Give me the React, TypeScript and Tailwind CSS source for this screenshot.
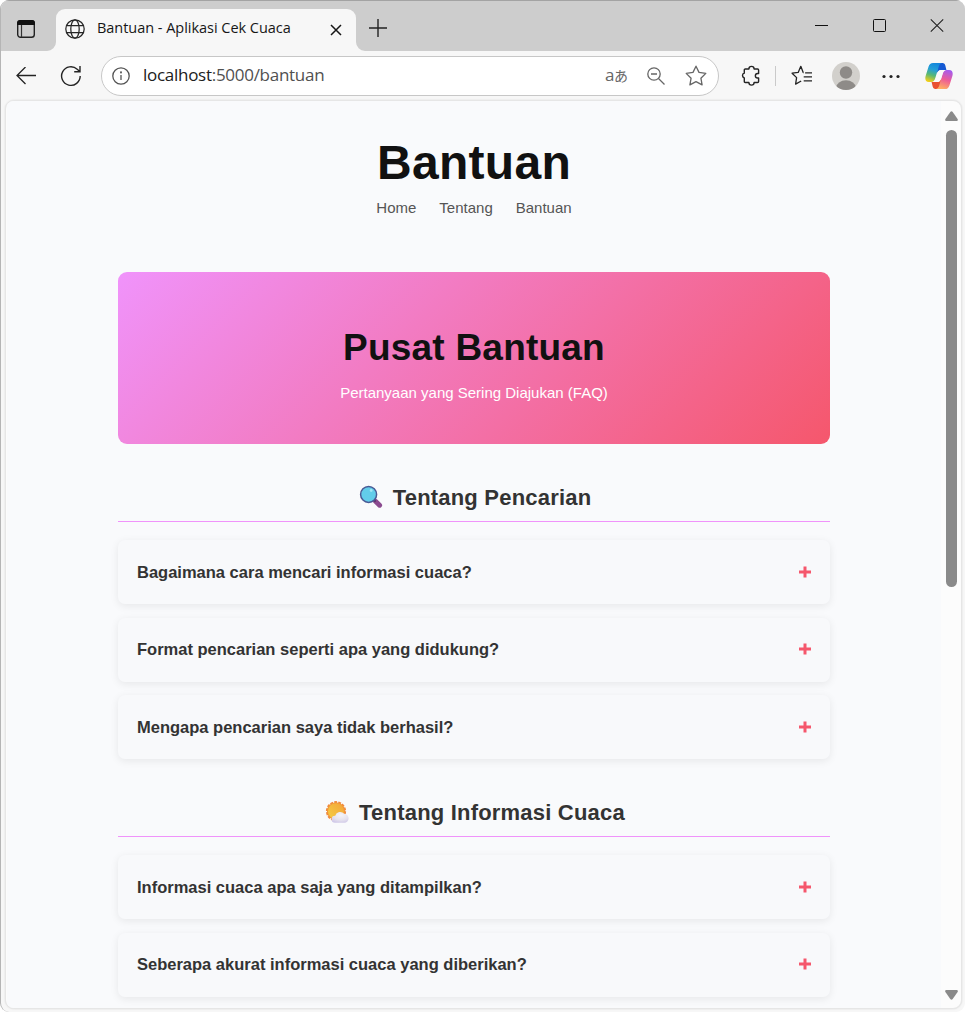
import React from "react";

const faqBlocks = [
  {
    icon: "search",
    title: "Tentang Pencarian",
    items: [
      "Bagaimana cara mencari informasi cuaca?",
      "Format pencarian seperti apa yang didukung?",
      "Mengapa pencarian saya tidak berhasil?",
    ],
  },
  {
    icon: "weather",
    title: "Tentang Informasi Cuaca",
    items: [
      "Informasi cuaca apa saja yang ditampilkan?",
      "Seberapa akurat informasi cuaca yang diberikan?",
    ],
  },
];

function MagnifierEmoji() {
  return (
    <svg width="24" height="24" viewBox="0 0 24 24" className="mt-px shrink-0">
      <path d="M16.5 16.3 20.6 20.2" stroke="#8b4a8f" strokeWidth="5" strokeLinecap="round" />
      <path d="m14.6 14.6 2 2" stroke="#533566" strokeWidth="2" />
      <circle cx="9.6" cy="9.4" r="8" fill="#62cdea" stroke="#4a5a95" strokeWidth="1.5" />
      <circle cx="12.2" cy="5.5" r="1.4" fill="#a1e6f5" />
    </svg>
  );
}

function SunCloudEmoji() {
  return (
    <svg width="24" height="24" viewBox="0 0 24 24" className="mt-px shrink-0">
      <defs>
        <linearGradient id="sun" x1="0" y1="1" x2="1" y2="0">
          <stop stopColor="#f5cf43" />
          <stop offset="1" stopColor="#f3a338" />
        </linearGradient>
        <radialGradient id="cloud" cx=".55" cy=".3" r=".75">
          <stop stopColor="#f5f4f7" />
          <stop offset=".6" stopColor="#e5e2ee" />
          <stop offset="1" stopColor="#cfc7e8" />
        </radialGradient>
      </defs>
      <circle cx="11" cy="11.2" r="9" fill="none" stroke="#f0883c" strokeWidth="2.2" strokeDasharray="2.8 1.24" />
      <circle cx="11" cy="11.2" r="9" fill="#f19439" />
      <circle cx="11" cy="11.2" r="8" fill="url(#sun)" />
      <path d="M10 22.8a3.5 3.5 0 1 1 .2-7 5.3 5.3 0 0 1 9-2.1c2.7.3 4.4 2.2 4.4 4.6 0 2.6-1.9 4.5-4.4 4.5Z" fill="url(#cloud)" />
    </svg>
  );
}

function TabStrip() {
  return (
    <div className="flex h-[51px] shrink-0 items-end border-t border-[#a3a3a3] bg-[#cdcdcd]">
      <div className="flex h-[42px] w-[55px] items-center pl-[15px]">
        <svg width="20" height="20" viewBox="0 0 20 20" fill="none" className="relative -top-px">
          <rect x="1.7" y="1.7" width="16.6" height="16.6" rx="2.8" stroke="#222" strokeWidth="1.4" />
          <path d="M1 6V4a3 3 0 0 1 3-3h12a3 3 0 0 1 3 3v2Z" fill="#111" />
          <path d="M5.5 6v12" stroke="#333" strokeWidth="1.2" />
        </svg>
      </div>
      <div className="relative flex h-[42px] w-[300px] items-center rounded-t-[9px] bg-[#f7f7f7] pl-[9px]">
        <svg width="9" height="9" className="absolute -left-[9px] bottom-0"><path d="M9 0v9H0a9 9 0 0 0 9-9Z" fill="#f7f7f7" /></svg>
        <svg width="9" height="9" className="absolute -right-[9px] bottom-0"><path d="M0 0v9h9a9 9 0 0 1-9-9Z" fill="#f7f7f7" /></svg>
        <svg width="20" height="20" viewBox="0 0 20 20" fill="none" stroke="#262626" strokeWidth="1.25" className="relative -top-px">
          <circle cx="10" cy="10" r="9.2" />
          <ellipse cx="10" cy="10" rx="4.2" ry="9.2" />
          <path d="M1.7 6.5h16.6M1.7 13.5h16.6" />
        </svg>
        <span className="relative -top-[2px] ml-[12px] w-[233px] shrink-0 whitespace-nowrap font-['Open_Sans','Noto_Sans',sans-serif] text-[14.5px] tracking-[-0.03px] text-[#161616]">Bantuan - Aplikasi Cek Cuaca</span>
        <svg width="12" height="12" viewBox="0 0 12 12" stroke="#161616" strokeWidth="1.5" className="shrink-0"><path d="m1 1 10 10M11 1 1 11" /></svg>
      </div>
      <svg width="18" height="18" viewBox="0 0 18 18" stroke="#222" strokeWidth="1.4" className="mb-[14px] ml-[13px]"><path d="M9 0v18M0 9h18" /></svg>
      <div className="mb-[17px] ml-auto flex items-center pr-[21px]">
        <svg width="13" height="16" viewBox="0 0 13 16" stroke="#111" className="mr-[45px]"><path d="M0 7.5h13" /></svg>
        <svg width="13" height="16" viewBox="0 0 13 16" fill="none" stroke="#111" className="mr-[44px]"><rect x=".5" y="1.5" width="12" height="12" rx="1" /></svg>
        <svg width="14" height="16" viewBox="0 0 14 16" stroke="#222" strokeWidth="1.1"><path d="m.8 1.3 12.4 12.4M13.2 1.3.8 13.7" /></svg>
      </div>
    </div>
  );
}

function CopilotMark() {
  return (
    <svg width="28" height="28" viewBox="0 0 28 28">
      <defs>
        <linearGradient id="cpA" x1=".6" y1="0" x2=".3" y2="1">
          <stop stopColor="#1386dc" /><stop offset=".35" stopColor="#239fd8" /><stop offset=".65" stopColor="#58b875" /><stop offset="1" stopColor="#f2cf19" />
        </linearGradient>
        <linearGradient id="cpB" x1=".7" y1="0" x2=".4" y2="1">
          <stop stopColor="#a45bf0" /><stop offset=".5" stopColor="#ed5c97" /><stop offset="1" stopColor="#ffaf62" />
        </linearGradient>
      </defs>
      <path d="M13 1h4.4c1.8 0 2.5 1 3 2.8l1 4.2h-5.4c-2.4 0-3.4 1.2-4.2 3.6Z" fill="#1559d3" />
      <path d="M15 27h-4.4c-1.8 0-2.5-1-3-2.8l-1-4.2H12c2.4 0 3.4-1.2 4.2-3.6Z" fill="#e95130" />
      <path d="M8 1h9.5c-2 0-3 1.4-3.7 3.4L10.6 15c-.9 3.2-2 5-4.4 5H3.8C.5 20-.3 17.2.7 13.8L3.6 4.6C4.4 2.2 5.6 1 8 1Z" fill="url(#cpA)" />
      <path d="M20 27h-9.5c2 0 3-1.4 3.7-3.4L17.4 13c.9-3.2 2-5 4.4-5h2.4c3.3 0 4.1 2.8 3.1 6.2l-2.9 9.2C23.6 25.8 22.4 27 20 27Z" fill="url(#cpB)" />
      <path d="M18.3 8h2.5c-2 .5-2.8 2-3.4 4l-1.3 4.3c-.8 2.5-1.7 3.7-4.1 3.7H8.3c1.5-.7 2-2.2 2.6-4l1.3-4.2C13 9.2 14.2 8 16 8Z" fill="#fafafa" />
    </svg>
  );
}

function Toolbar() {
  return (
    <div className="flex h-[49px] shrink-0 items-center bg-[#f7f7f7] pl-[15px]">
      <svg width="20" height="18" viewBox="0 0 20 18" fill="none" stroke="#242424" strokeWidth="1.3"><path d="M20 8.5H1M9.5 0 1 8.5 9.5 17" /></svg>
      <svg width="22" height="22" viewBox="0 0 22 22" fill="none" stroke="#242424" strokeWidth="1.4" className="ml-[24px]"><path d="M20.2 11a9.3 9.3 0 1 1-3-6.8L19.8 6.5M20 1v5.8h-5.8" /></svg>
      <div className="ml-[19px] flex h-[40px] w-[618px] items-center rounded-full border border-[#c7c7c7] bg-white pl-[10px]">
        <svg width="18" height="18" viewBox="0 0 18 18" fill="none" stroke="#555" strokeWidth="1.3"><circle cx="9" cy="9" r="8.2" /><path d="M9 8v5" /><circle cx="9" cy="5.4" r=".4" fill="#555" /></svg>
        <span className="relative -top-px ml-[13px] w-[462px] whitespace-nowrap font-['Open_Sans','Noto_Sans',sans-serif] text-[17px] tracking-[-0.28px] text-[#505050]"><span className="text-[#202020]">localhost</span>:5000/bantuan</span>
        <span className="relative -top-px w-[23px] whitespace-nowrap font-['Open_Sans','Noto_Sans_CJK_JP',sans-serif] text-[17px] leading-none tracking-[-0.5px] text-[#666]">a<span className="text-[14px]">あ</span></span>
        <svg width="18" height="18" viewBox="0 0 18 18" fill="none" stroke="#666" strokeWidth="1.3" className="ml-[19px]"><circle cx="7" cy="7" r="6.2" /><path d="M4 7h6M11.5 11.5l6 6" /></svg>
        <svg width="22" height="21" viewBox="0 0 22 21" fill="none" stroke="#666" strokeWidth="1.3" strokeLinejoin="round" className="ml-[20px]"><path d="m11 1.2 3 6.2 6.8 1-4.9 4.8 1.2 6.7L11 16.7l-6.1 3.2 1.2-6.7-4.9-4.8 6.8-1Z" /></svg>
      </div>
      <svg width="20" height="21" viewBox="0 0 20 21" fill="none" stroke="#242424" strokeWidth="1.4" strokeLinejoin="round" className="ml-[22px]">
        <path d="M4.3 4h3.6a2.6 2.6 0 0 1 5.2 0h3.5q1 0 1 1v3.5h-1a2.2 2.2 0 0 0 0 4.5h1v3.5q0 1-1 1h-3.5a2.6 2.6 0 0 1-5.2 0H4.3q-1 0-1-1V13a2.5 2.5 0 0 1 0-4.8V5q0-1 1-1Z" />
      </svg>
      <div className="ml-[14px] h-[20px] w-px bg-[#cacaca]" />
      <svg width="21" height="21" viewBox="0 0 21 21" fill="none" stroke="#242424" strokeWidth="1.3" strokeLinejoin="round" className="ml-[15px]"><path d="M12.7 7.5h-.5L9.8 1.3 7.2 7.4l-6.1.8 4.5 4.4-1 6.5L10.2 16M14.1 7.8H21M12.7 11.8H21M12.7 15.8H21" /></svg>
      <svg width="28" height="28" viewBox="0 0 28 28" className="ml-[20px]">
        <defs><clipPath id="profile"><circle cx="14" cy="14" r="14" /></clipPath></defs>
        <g clipPath="url(#profile)"><path fill="#d2d0cc" d="M0 0h28v28H0z" /><circle cx="14" cy="10.5" r="6.2" fill="#8e8b88" /><ellipse cx="14" cy="25.5" rx="9.8" ry="7.2" fill="#8e8b88" /></g>
      </svg>
      <svg width="18" height="6" viewBox="0 0 18 6" fill="#242424" className="ml-[22px]"><circle cx="2" cy="3.5" r="1.6" /><circle cx="9" cy="3.5" r="1.6" /><circle cx="16" cy="3.5" r="1.6" /></svg>
      <div className="ml-[25px]"><CopilotMark /></div>
    </div>
  );
}

function FaqCard({ question }: { question: string }) {
  return (
    <div className="flex h-[64px] items-center justify-between rounded-[7px] bg-[#f8f9fb] px-[19px] shadow-[0_2px_9px_rgba(0,0,0,0.08)]">
      <span className="whitespace-nowrap text-[16.5px] font-bold text-[#333]">{question}</span>
      <svg width="12" height="12" viewBox="0 0 12 12" stroke="#f5576c" strokeWidth="3" className="relative -top-[0.5px]"><path d="M6 .5v11M0 6h12" /></svg>
    </div>
  );
}

function HelpPage() {
  return (
    <main className="flex flex-1 flex-col items-center overflow-hidden bg-[#f9fafc] font-['Liberation_Sans',Arial,sans-serif]">
      <h1 className="mt-[34px] h-[56px] text-[48px] font-bold leading-[56px] tracking-[0.3px] text-[#111]">Bantuan</h1>
      <nav className="mt-[7px] flex h-[20px] gap-[23px] text-[15px] leading-[20px] text-[#555]">
        <span>Home</span><span>Tentang</span><span>Bantuan</span>
      </nav>
      <section className="mt-[54px] flex h-[172px] w-[712px] shrink-0 flex-col items-center rounded-[9px] bg-[linear-gradient(135deg,#f093fb_0%,#f5576c_100%)] pt-[54px]">
        <h2 className="text-[37px] font-bold leading-[44px] tracking-[0.22px] text-[#111]">Pusat Bantuan</h2>
        <p className="mt-[13px] text-[15px] leading-[20px] text-white">Pertanyaan yang Sering Diajukan (FAQ)</p>
      </section>
      {faqBlocks.map((block) => (
        <section key={block.title} className="mt-[36px] w-[712px] shrink-0">
          <div className="flex h-[42px] items-start justify-center gap-[10px] border-b border-[#f093fb] pl-[2px] pt-[4px]">
            {block.icon === "search" ? <MagnifierEmoji /> : <SunCloudEmoji />}
            <h3 className="mt-px whitespace-nowrap text-[22px] font-bold leading-[26px] tracking-[0.2px] text-[#333]">{block.title}</h3>
          </div>
          <div className="mt-[18px] flex flex-col gap-[13.5px]">
            {block.items.map((item) => <FaqCard key={item} question={item} />)}
          </div>
        </section>
      ))}
    </main>
  );
}

export default function App() {
  return (
    <div className="flex h-[1012px] w-[965px] flex-col overflow-hidden rounded-[9px] border-l border-[#b5b5b5] bg-[#f7f7f7]">
      <TabStrip />
      <Toolbar />
      <div className="ml-[4px] mr-[3px] flex h-[909px] shrink-0 overflow-hidden rounded-[9px] border border-[#e6e6e6] bg-[#fcfcfc] pl-px shadow-[0_0_2px_rgba(0,0,0,0.12)]">
        <HelpPage />
        <div className="flex w-[20px] shrink-0 flex-col items-center pt-[10px]">
          <svg width="13" height="10" viewBox="0 0 13 10" fill="#8a8a8a"><path d="M5.3 1q1.2-1.5 2.4 0l4.9 7q.8 1.8-1 1.9H1.4Q-.4 9.8.4 8Z" /></svg>
          <div className="mt-[9px] h-[457px] w-[11px] rounded-full bg-[#8a8a8a]" />
          <svg width="13" height="10" viewBox="0 0 13 10" fill="#8a8a8a" className="mb-[8px] mt-auto"><path d="M5.3 9q1.2 1.5 2.4 0l4.9-7q.8-1.8-1-1.9H1.4Q-.4.2.4 2Z" /></svg>
        </div>
      </div>
    </div>
  );
}
